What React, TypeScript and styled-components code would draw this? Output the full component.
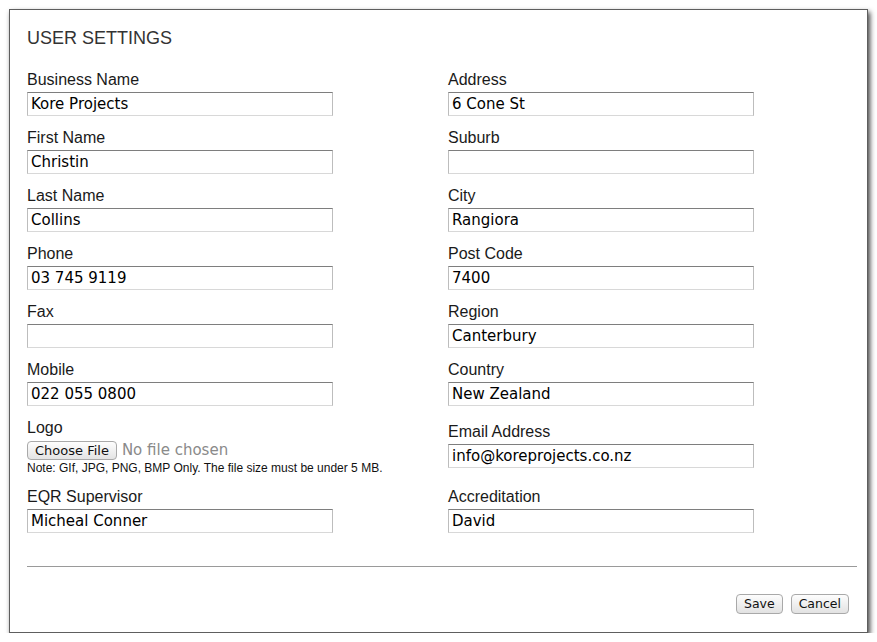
import React from 'react';
import styled, { createGlobalStyle } from 'styled-components';

const GlobalStyle = createGlobalStyle`
  html, body {
    margin: 0;
    padding: 0;
    background: #ffffff;
  }
  body {
    font-family: "Liberation Sans", Arial, sans-serif;
  }
`;

type Field = { label: string; value?: string };

const leftFields: Field[] = [
  { label: 'Business Name', value: 'Kore Projects' },
  { label: 'First Name', value: 'Christin' },
  { label: 'Last Name', value: 'Collins' },
  { label: 'Phone', value: '03 745 9119' },
  { label: 'Fax' },
  { label: 'Mobile', value: '022 055 0800' },
];

const rightFields: Field[] = [
  { label: 'Address', value: '6 Cone St' },
  { label: 'Suburb' },
  { label: 'City', value: 'Rangiora' },
  { label: 'Post Code', value: '7400' },
  { label: 'Region', value: 'Canterbury' },
  { label: 'Country', value: 'New Zealand' },
];

function FormField({ label, value, $offset }: Field & { $offset?: number }) {
  return (
    <FieldWrapper $offset={$offset}>
      <Label>{label}</Label>
      <TextInput type="text" defaultValue={value ?? ''} />
    </FieldWrapper>
  );
}

function App() {
  return (
    <>
      <GlobalStyle />
      <Page>
        <Panel>
          <Title>USER SETTINGS</Title>
          <FormGrid>
            {leftFields.map((f, i) => (
              <React.Fragment key={f.label}>
                <FormField {...f} />
                <FormField {...rightFields[i]} />
              </React.Fragment>
            ))}
            <FieldWrapper>
              <Label>Logo</Label>
              <FileRow>
                <FileButton type="button">Choose File</FileButton>
                <FileStatus>No file chosen</FileStatus>
              </FileRow>
              <Note>Note: GIf, JPG, PNG, BMP Only. The file size must be under 5 MB.</Note>
            </FieldWrapper>
            <FormField label="Email Address" value="info@koreprojects.co.nz" $offset={4} />
            <FormField label="EQR Supervisor" value="Micheal Conner" />
            <FormField label="Accreditation" value="David" />
          </FormGrid>
          <Divider />
          <ButtonBar>
            <ActionButton type="button">Save</ActionButton>
            <ActionButton type="button">Cancel</ActionButton>
          </ButtonBar>
        </Panel>
      </Page>
    </>
  );
}

const Page = styled.div`
  padding: 9px 0 0 9px;
`;

const Panel = styled.div`
  box-sizing: border-box;
  width: 859px;
  padding: 17px 10px 18px 17px;
  background: #fff;
  border: 1px solid #5e5e5e;
  box-shadow: 2px 3px 5px rgba(0, 0, 0, 0.75);
`;

const Title = styled.h1`
  margin: 0 0 22px 0;
  font-size: 18px;
  line-height: 22px;
  font-weight: normal;
  color: #333;
`;

const FormGrid = styled.div`
  display: grid;
  grid-template-columns: 421px 1fr;
  row-gap: 13px;
  align-items: start;
`;

const FieldWrapper = styled.div<{ $offset?: number }>`
  display: flex;
  flex-direction: column;
  margin-top: ${(p) => p.$offset ?? 0}px;
`;

const Label = styled.label`
  font-size: 16px;
  line-height: 18px;
  color: #1a1a1a;
  margin-bottom: 3px;
`;

const TextInput = styled.input`
  box-sizing: border-box;
  width: 306px;
  height: 24px;
  margin: 0;
  padding: 0 3px;
  font-family: "DejaVu Sans", "Liberation Sans", sans-serif;
  font-size: 15px;
  color: #000;
  background: #fff;
  border: 1px solid #bdbdbd;
  border-top-color: #7e7e7e;
  border-bottom-color: #d8d8d8;
  border-radius: 0;
  outline: none;
`;

const FileRow = styled.div`
  display: flex;
  align-items: center;
  margin-top: 1px;
`;

const FileButton = styled.button`
  box-sizing: border-box;
  height: 19px;
  padding: 0 7px;
  margin: 0;
  font-family: "DejaVu Sans", "Liberation Sans", sans-serif;
  font-size: 13px;
  line-height: 17px;
  color: #111;
  background: linear-gradient(#fdfdfd, #e4e4e4);
  border: 1px solid #a9a9a9;
  border-radius: 4px;
`;

const FileStatus = styled.span`
  margin-left: 5px;
  font-family: "DejaVu Sans", "Liberation Sans", sans-serif;
  font-size: 15px;
  line-height: 19px;
  color: #8a8a8a;
`;

const Note = styled.div`
  margin-top: 2px;
  font-size: 12px;
  line-height: 13px;
  color: #111;
`;

const Divider = styled.hr`
  margin: 33px 0 0 0;
  border: none;
  border-top: 1px solid #9a9a9a;
  height: 0;
`;

const ButtonBar = styled.div`
  display: flex;
  justify-content: flex-end;
  gap: 8px;
  margin: 27px 8px 0 0;
`;

const ActionButton = styled.button`
  box-sizing: border-box;
  height: 20px;
  padding: 0 7px;
  margin: 0;
  font-family: "DejaVu Sans", "Liberation Sans", sans-serif;
  font-size: 12.5px;
  line-height: 18px;
  color: #111;
  background: linear-gradient(#fdfdfd, #e2e2e2);
  border: 1px solid #a9a9a9;
  border-radius: 4px;
`;

export default App;
